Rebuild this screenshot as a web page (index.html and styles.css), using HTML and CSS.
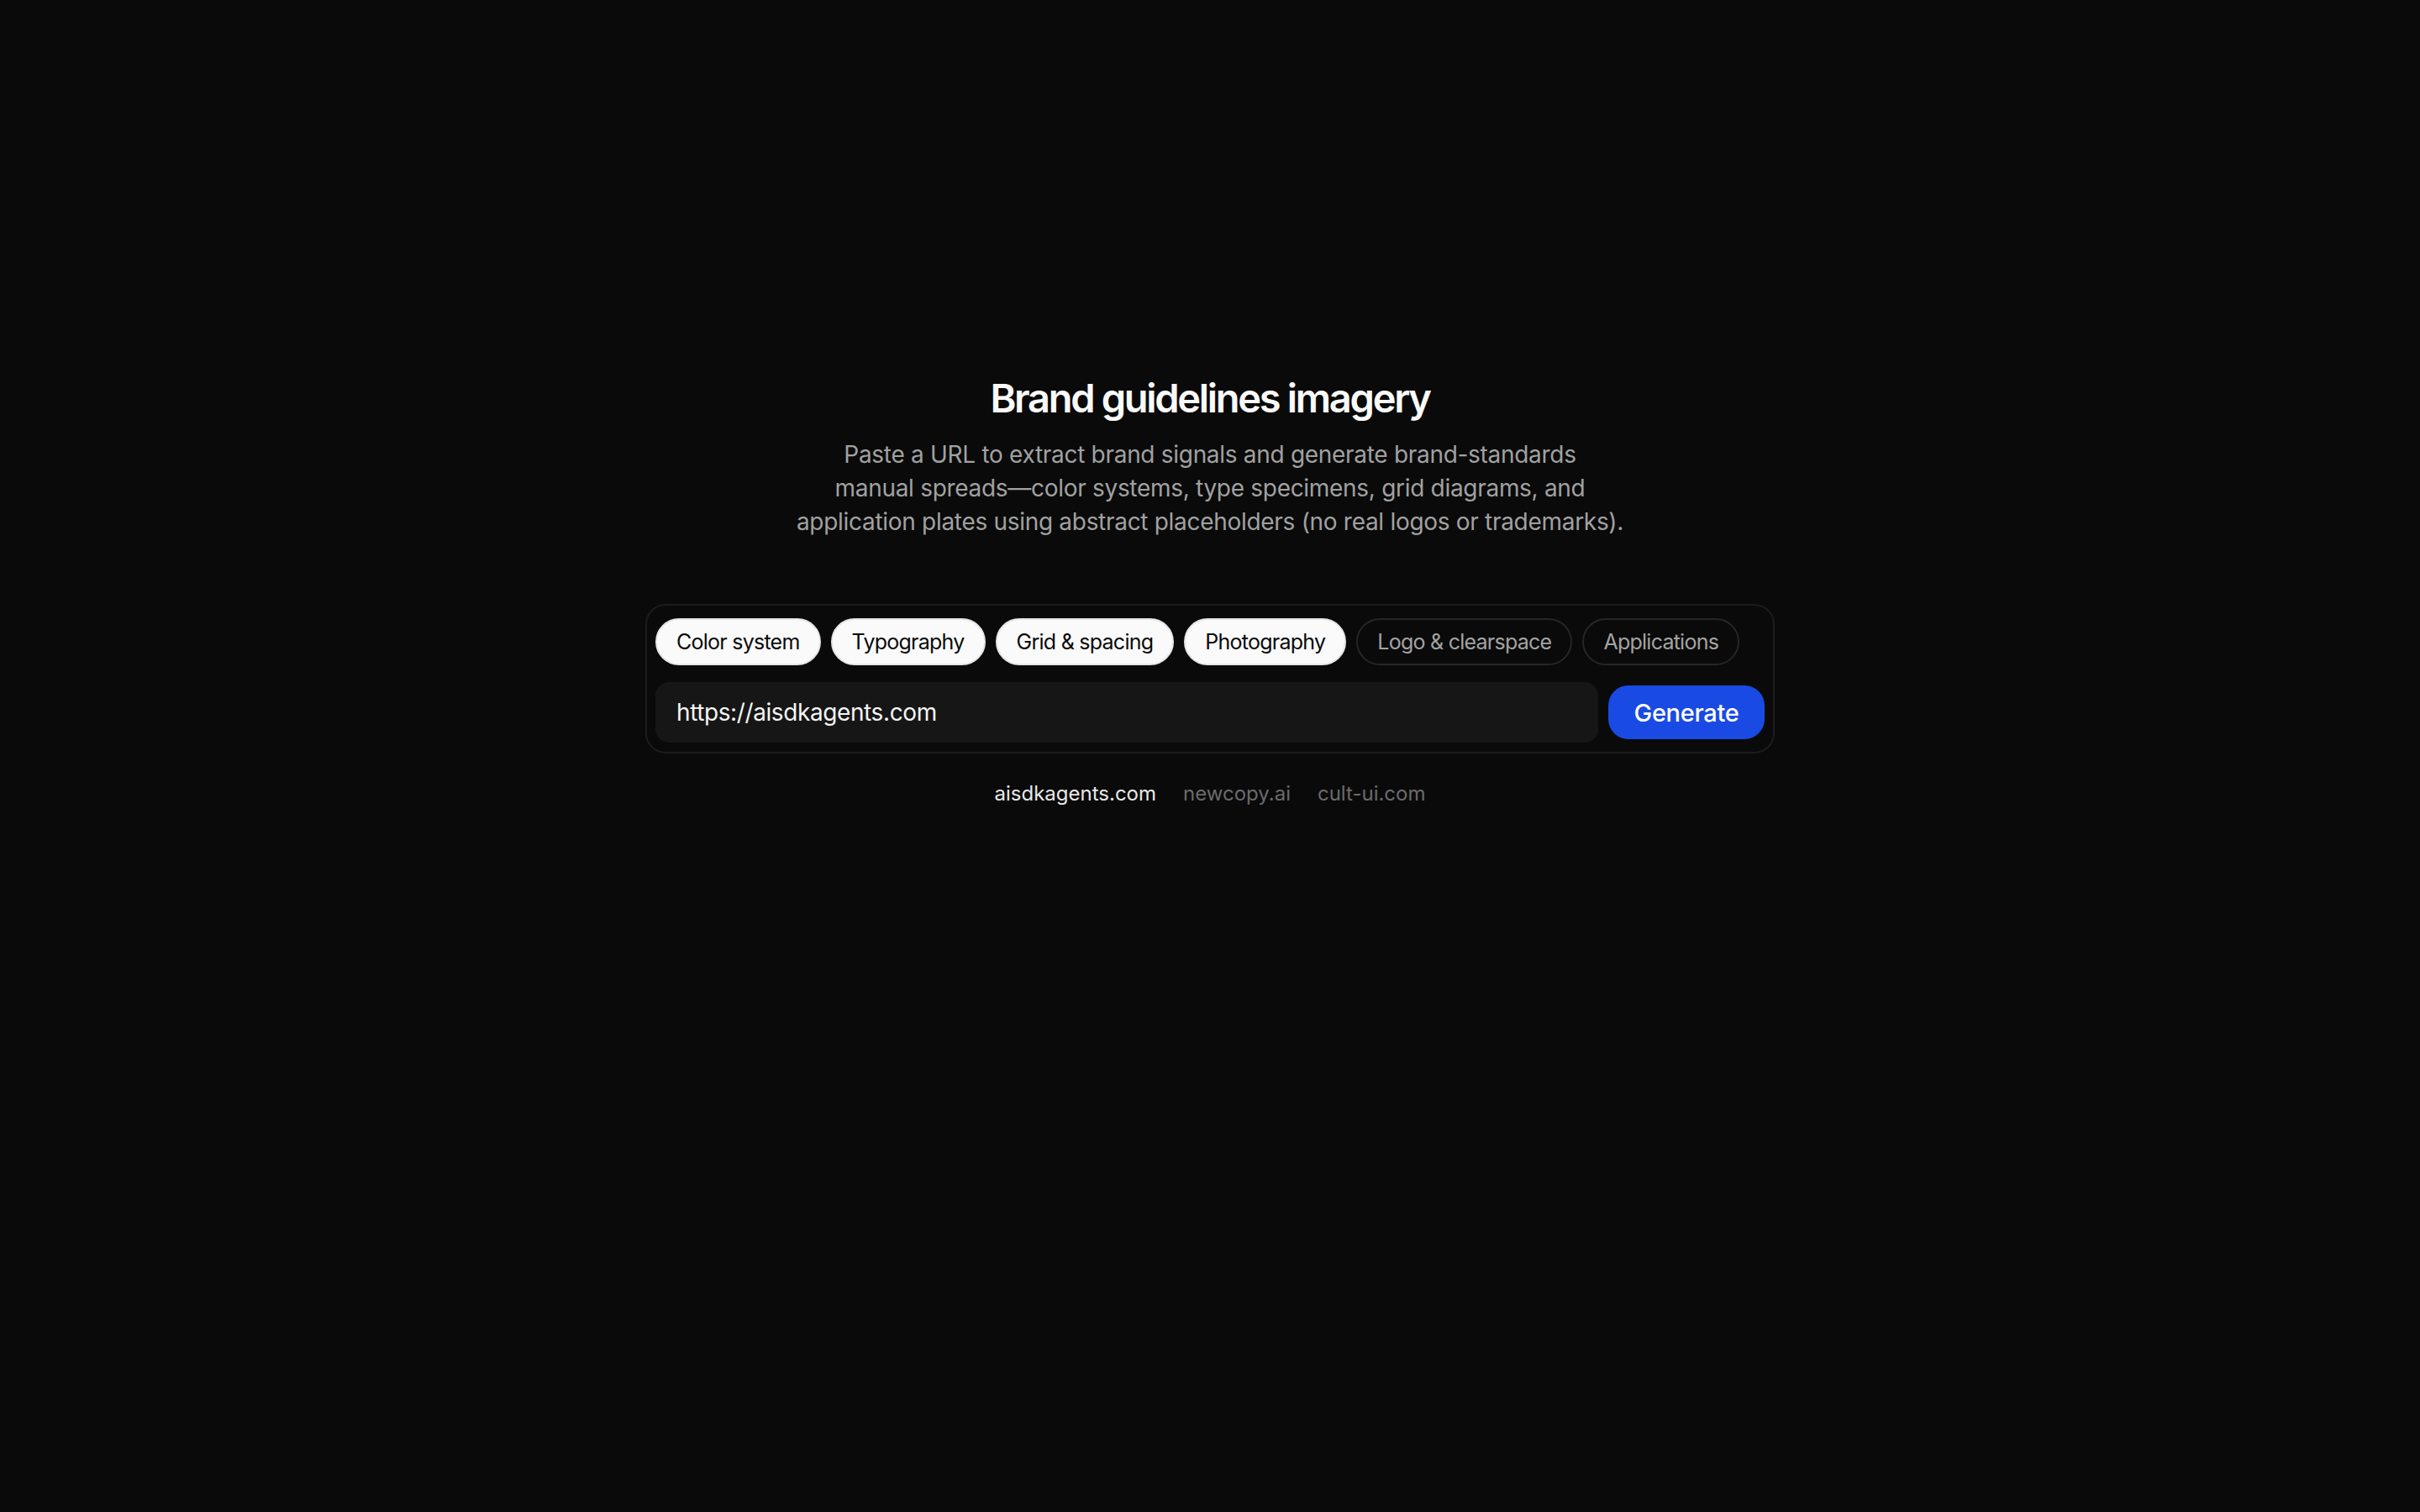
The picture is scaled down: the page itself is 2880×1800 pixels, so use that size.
FILE: index.html
```html
<!DOCTYPE html>
<html lang="en">
<head>
<meta charset="utf-8">
<title>Brand guidelines imagery</title>
<link rel="stylesheet" href="styles.css">
</head>
<body>
<main class="page">
  <header class="hero">
    <h1 class="title">Brand guidelines imagery</h1>
    <p class="lead">Paste a URL to extract brand signals and generate brand-standards<br>manual spreads—color systems, type specimens, grid diagrams, and<br>application plates using abstract placeholders (no real logos or trademarks).</p>
  </header>
  <section class="card">
    <div class="chips">
      <button class="chip chip-on">Color system</button>
      <button class="chip chip-on">Typography</button>
      <button class="chip chip-on">Grid &amp; spacing</button>
      <button class="chip chip-on">Photography</button>
      <button class="chip">Logo &amp; clearspace</button>
      <button class="chip">Applications</button>
    </div>
    <div class="row">
      <div class="input">https://aisdkagents.com</div>
      <button class="go">Generate</button>
    </div>
  </section>
  <nav class="links">
    <span class="link link-on">aisdkagents.com</span>
    <span class="link">newcopy.ai</span>
    <span class="link">cult-ui.com</span>
  </nav>
</main>
</body>
</html>
```

FILE: styles.css
```css
html, body {
  margin: 0;
  padding: 0;
  background: #0a0a0a;
}
body {
  font-family: Inter, "Liberation Sans", sans-serif;
  color: #fafafa;
  min-height: 1800px;
}
.page {
  display: flex;
  flex-direction: column;
  align-items: center;
  padding-top: 446px;
}
.hero {
  display: flex;
  flex-direction: column;
  align-items: center;
  text-align: center;
}
.title {
  margin: 0;
  font-size: 47px;
  line-height: 56px;
  font-weight: 600;
  letter-spacing: -2.3px;
  color: #fafafa;
}
.lead {
  margin: 19px 0 0;
  font-size: 28px;
  line-height: 40px;
  color: #a1a1a1;
  letter-spacing: -0.3px;
}
.card {
  margin-top: 78px;
  width: 1344px;
  box-sizing: border-box;
  border: 2px solid #1c1c1c;
  border-radius: 24px;
  padding: 15px 10px 11px;
  display: flex;
  flex-direction: column;
  gap: 20px;
}
.chips {
  display: flex;
  flex-wrap: nowrap;
  gap: 12px;
}
.chip {
  height: 56px;
  box-sizing: border-box;
  padding: 0 23px;
  border-radius: 28px;
  border: 2px solid #262626;
  background: transparent;
  color: #a3a3a3;
  font-family: Inter, "Liberation Sans", sans-serif;
  font-size: 25px;
  letter-spacing: -0.75px;
  white-space: nowrap;
  cursor: pointer;
}
.chip-on {
  background: #fafafa;
  border-color: #e5e5e5;
  color: #0a0a0a;
}
.row {
  display: flex;
  align-items: center;
  gap: 12px;
}
.input {
  flex: 1;
  height: 72px;
  box-sizing: border-box;
  border-radius: 16px;
  background: #161616;
  padding-left: 25px;
  display: flex;
  align-items: center;
  font-size: 28px;
  color: #f5f5f5;
  letter-spacing: -0.4px;
}
.go {
  width: 186px;
  height: 64px;
  border: 0;
  border-radius: 24px;
  background: #1a4ae4;
  color: #ffffff;
  font-family: Inter, "Liberation Sans", sans-serif;
  font-size: 29px;
  font-weight: 500;
  letter-spacing: -0.3px;
  cursor: pointer;
}
.links {
  margin-top: 32px;
  display: flex;
  gap: 32px;
}
.link {
  font-size: 24px;
  line-height: 32px;
  color: #6b6b6b;
}
.link-on {
  color: #e8e8e8;
}
```
